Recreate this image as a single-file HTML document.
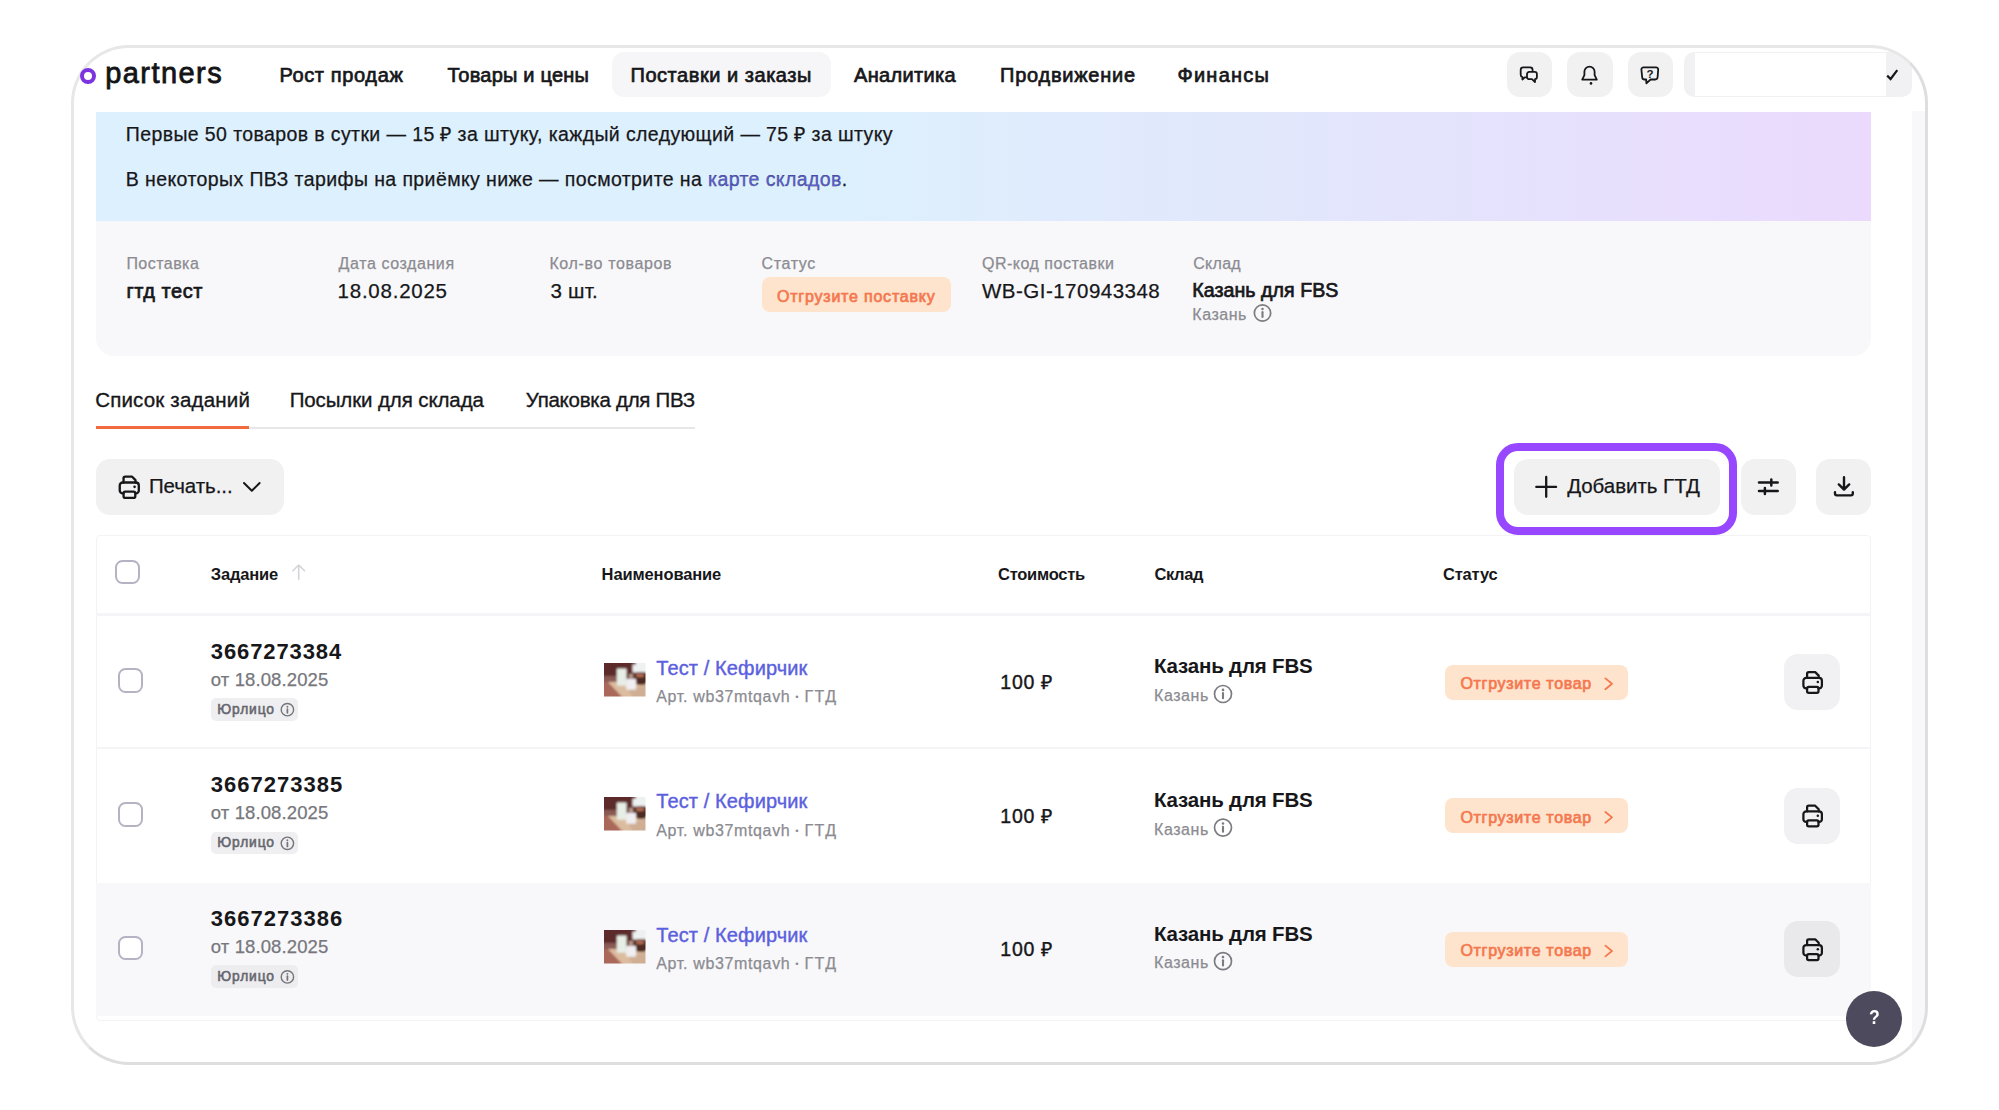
<!DOCTYPE html>
<html lang="ru">
<head>
<meta charset="utf-8">
<title>Partners — Поставки и заказы</title>
<style>
html,body{margin:0;padding:0;background:#fff;}
body{width:1999px;height:1110px;overflow:hidden;position:relative;font-family:"Liberation Sans",sans-serif;}
#frame{position:absolute;left:71.4px;top:44.8px;width:1856.4px;height:1020.3px;box-sizing:border-box;border:3px solid #e7e7e8;border-right-color:#dedee1;border-bottom-color:#dedede;border-radius:58px;}
#clip{position:absolute;left:74.4px;top:47.8px;width:1850.4px;height:1014.3px;border-radius:55px;overflow:hidden;}
#page{position:absolute;left:-74.4px;top:-47.8px;width:1999px;height:1110px;}
.b{position:absolute;box-sizing:border-box;}
.t{position:absolute;white-space:nowrap;line-height:1;margin:0;}
.btn{background:#f1f1f2;border-radius:13px;}
.cb{border:2px solid #b5b3c3;border-radius:7.5px;background:#fff;width:24.5px;height:24.5px;}
.badge{background:#ffe4cd;border-radius:8px;}
svg{position:absolute;left:0;top:0;overflow:visible;}
</style>
</head>
<body>
<div id="clip"><div id="page">
  <!-- scrollbar track -->
  <div class="b" style="left:1912px;top:111px;width:14px;height:960px;background:#f8f8fa"></div>
  <!-- nav active pill -->
  <div class="b" style="left:612px;top:52px;width:218.5px;height:45px;background:#f6f6f8;border-radius:12px"></div>
  <!-- header buttons -->
  <div class="b btn" style="left:1506.5px;top:52px;width:45.6px;height:45px"></div>
  <div class="b btn" style="left:1567.1px;top:52px;width:45.6px;height:45px"></div>
  <div class="b btn" style="left:1627.9px;top:52px;width:45.6px;height:45px"></div>
  <div class="b" style="left:1683.6px;top:52px;width:228.4px;height:44.5px;background:#f1f1f3;border-radius:10px"></div>
  <div class="b" style="left:1695px;top:53px;width:191px;height:42.6px;background:#fff"></div>
  <!-- banner -->
  <div class="b" style="left:96px;top:112px;width:1775.4px;height:109.5px;background:linear-gradient(90deg,#ddf0fd 0%,#ddf0fd 42%,#e3e5fc 72%,#ebdafd 100%)"></div>
  <!-- info card -->
  <div class="b" style="left:96px;top:221px;width:1775.4px;height:134.7px;background:#f8f8fa;border-radius:0 0 18px 18px"></div>
  <div class="b badge" style="left:761.5px;top:277.2px;width:189.8px;height:34.7px"></div>
  <!-- tabs underline -->
  <div class="b" style="left:96px;top:426.5px;width:598.8px;height:2px;background:#e7e7ea"></div>
  <div class="b" style="left:96px;top:426.2px;width:153.4px;height:2.7px;background:#f26b3e"></div>
  <!-- toolbar buttons -->
  <div class="b btn" style="left:96.2px;top:459px;width:188.2px;height:56px;border-radius:14px"></div>
  <div class="b btn" style="left:1513.6px;top:459px;width:206.4px;height:55.5px;border-radius:14px"></div>
  <div class="b btn" style="left:1741px;top:459px;width:55.2px;height:55.5px;border-radius:14px"></div>
  <div class="b btn" style="left:1816.3px;top:459px;width:55.2px;height:55.5px;border-radius:14px"></div>
  <!-- table -->
  <div class="b" style="left:96.3px;top:535px;width:1775px;height:485.6px;border:1.5px solid #f3f3f5;border-radius:4px;background:#fff"></div>
  <div class="b" style="left:96.3px;top:882.5px;width:1775px;height:133px;background:#f8f8fa"></div>
  <div class="b" style="left:96.3px;top:613.2px;width:1775px;height:3px;background:#f5f5f7"></div>
  <div class="b" style="left:96.3px;top:747px;width:1775px;height:2px;background:#f5f5f7"></div>
  <!-- purple highlight -->
  <div class="b" style="left:1496.4px;top:443px;width:240.3px;height:92px;border:8.4px solid #9747ff;border-radius:22px"></div>
  <!-- checkboxes -->
  <div class="b cb" style="left:115.2px;top:559.6px"></div>
  <div class="b cb" style="left:118px;top:668.4px"></div>
  <div class="b cb" style="left:118px;top:802px"></div>
  <div class="b cb" style="left:118px;top:935.6px"></div>
<div class="b" style="left:210.8px;top:698.0px;width:87.2px;height:22.8px;background:#efeff1;border-radius:5px"></div>
<div class="b badge" style="left:1445px;top:664.5px;width:182.5px;height:35px"></div>
<div class="b btn" style="left:1784.3px;top:653.9px;width:56px;height:56.3px;border-radius:14px;background:#f1f1f3"></div>
<svg style="left:604.2px;top:663.2px" width="41.5" height="33.5" viewBox="0 0 41.5 33.5">
<defs><filter id="bl0" x="-10%" y="-10%" width="120%" height="120%"><feGaussianBlur stdDeviation="0.9"/></filter>
<clipPath id="tc0"><rect width="41.5" height="33.5"/></clipPath></defs>
<g clip-path="url(#tc0)"><g filter="url(#bl0)">
<rect x="-3" y="-3" width="48" height="40" fill="#5b2b2c"/>
<rect x="-3" y="13" width="16" height="8" fill="#8a5a55"/>
<polygon points="-3,19 12,19 22,36 -3,36" fill="#a9675a"/>
<polygon points="4,19 44,19 44,36 20,36" fill="#dcbc9f"/>
<polygon points="24,26 44,22 44,36 30,36" fill="#cfae94"/>
<rect x="28.5" y="1.5" width="18" height="8" fill="#eef1f1"/>
<rect x="32" y="-3" width="14" height="6" fill="#eef1f1"/>
<ellipse cx="37" cy="15.5" rx="8" ry="6.6" fill="#4d2b22"/>
<ellipse cx="36" cy="12.2" rx="4.2" ry="2" fill="#b06a52"/>
<rect x="12.8" y="5.4" width="9.8" height="17.4" rx="1" fill="#e6eee6"/>
<rect x="22.2" y="15.8" width="9.8" height="11" rx="1" fill="#f1eef2"/>
<rect x="25" y="11" width="4" height="4.5" fill="#b59a8c"/>
</g></g></svg>
<div class="b" style="left:210.8px;top:831.6px;width:87.2px;height:22.8px;background:#efeff1;border-radius:5px"></div>
<div class="b badge" style="left:1445px;top:798.1px;width:182.5px;height:35px"></div>
<div class="b btn" style="left:1784.3px;top:787.5px;width:56px;height:56.3px;border-radius:14px;background:#f1f1f3"></div>
<svg style="left:604.2px;top:796.8px" width="41.5" height="33.5" viewBox="0 0 41.5 33.5">
<defs><filter id="bl1" x="-10%" y="-10%" width="120%" height="120%"><feGaussianBlur stdDeviation="0.9"/></filter>
<clipPath id="tc1"><rect width="41.5" height="33.5"/></clipPath></defs>
<g clip-path="url(#tc1)"><g filter="url(#bl1)">
<rect x="-3" y="-3" width="48" height="40" fill="#5b2b2c"/>
<rect x="-3" y="13" width="16" height="8" fill="#8a5a55"/>
<polygon points="-3,19 12,19 22,36 -3,36" fill="#a9675a"/>
<polygon points="4,19 44,19 44,36 20,36" fill="#dcbc9f"/>
<polygon points="24,26 44,22 44,36 30,36" fill="#cfae94"/>
<rect x="28.5" y="1.5" width="18" height="8" fill="#eef1f1"/>
<rect x="32" y="-3" width="14" height="6" fill="#eef1f1"/>
<ellipse cx="37" cy="15.5" rx="8" ry="6.6" fill="#4d2b22"/>
<ellipse cx="36" cy="12.2" rx="4.2" ry="2" fill="#b06a52"/>
<rect x="12.8" y="5.4" width="9.8" height="17.4" rx="1" fill="#e6eee6"/>
<rect x="22.2" y="15.8" width="9.8" height="11" rx="1" fill="#f1eef2"/>
<rect x="25" y="11" width="4" height="4.5" fill="#b59a8c"/>
</g></g></svg>
<div class="b" style="left:210.8px;top:965.2px;width:87.2px;height:22.8px;background:#ededf0;border-radius:5px"></div>
<div class="b badge" style="left:1445px;top:931.7px;width:182.5px;height:35px"></div>
<div class="b btn" style="left:1784.3px;top:921.1px;width:56px;height:56.3px;border-radius:14px;background:#e9e9eb"></div>
<svg style="left:604.2px;top:930.4px" width="41.5" height="33.5" viewBox="0 0 41.5 33.5">
<defs><filter id="bl2" x="-10%" y="-10%" width="120%" height="120%"><feGaussianBlur stdDeviation="0.9"/></filter>
<clipPath id="tc2"><rect width="41.5" height="33.5"/></clipPath></defs>
<g clip-path="url(#tc2)"><g filter="url(#bl2)">
<rect x="-3" y="-3" width="48" height="40" fill="#5b2b2c"/>
<rect x="-3" y="13" width="16" height="8" fill="#8a5a55"/>
<polygon points="-3,19 12,19 22,36 -3,36" fill="#a9675a"/>
<polygon points="4,19 44,19 44,36 20,36" fill="#dcbc9f"/>
<polygon points="24,26 44,22 44,36 30,36" fill="#cfae94"/>
<rect x="28.5" y="1.5" width="18" height="8" fill="#eef1f1"/>
<rect x="32" y="-3" width="14" height="6" fill="#eef1f1"/>
<ellipse cx="37" cy="15.5" rx="8" ry="6.6" fill="#4d2b22"/>
<ellipse cx="36" cy="12.2" rx="4.2" ry="2" fill="#b06a52"/>
<rect x="12.8" y="5.4" width="9.8" height="17.4" rx="1" fill="#e6eee6"/>
<rect x="22.2" y="15.8" width="9.8" height="11" rx="1" fill="#f1eef2"/>
<rect x="25" y="11" width="4" height="4.5" fill="#b59a8c"/>
</g></g></svg>
  <!-- help -->
  <div class="b" style="left:1846.4px;top:991px;width:56px;height:56px;border-radius:50%;background:#4c4a5c"></div>
  <div class="t" style="left:1869.4px;top:1007px;font-size:20px;font-weight:bold;color:#fff;transform:scaleX(0.88);transform-origin:left top">?</div>
<div class="t" style="left:279.40px;top:65.07px;font-size:20px;letter-spacing:0.627px;color:#17171a;-webkit-text-stroke:0.7px #17171a;">Рост продаж</div>
<div class="t" style="left:447.50px;top:65.07px;font-size:20px;letter-spacing:0.210px;color:#17171a;-webkit-text-stroke:0.7px #17171a;">Товары и цены</div>
<div class="t" style="left:630.50px;top:65.07px;font-size:20px;letter-spacing:0.535px;color:#17171a;-webkit-text-stroke:0.7px #17171a;">Поставки и заказы</div>
<div class="t" style="left:854.00px;top:65.07px;font-size:20px;letter-spacing:0.329px;color:#17171a;-webkit-text-stroke:0.7px #17171a;">Аналитика</div>
<div class="t" style="left:1000.00px;top:65.07px;font-size:20px;letter-spacing:0.763px;color:#17171a;-webkit-text-stroke:0.7px #17171a;">Продвижение</div>
<div class="t" style="left:1177.50px;top:65.07px;font-size:20px;letter-spacing:1.235px;color:#17171a;-webkit-text-stroke:0.7px #17171a;">Финансы</div>
<div class="t" style="left:125.80px;top:124.79px;font-size:19.5px;letter-spacing:0.390px;color:#17171a;-webkit-text-stroke:0.25px #17171a;">Первые 50 товаров в сутки — 15 ₽ за штуку, каждый следующий — 75 ₽ за штуку</div>
<div class="t" style="left:125.80px;top:169.99px;font-size:19.5px;letter-spacing:0.402px;color:#17171a;-webkit-text-stroke:0.25px #17171a;">В некоторых ПВЗ тарифы на приёмку ниже — посмотрите на <span style="color:#5b60de">карте складов</span>.</div>
<div class="t" style="left:126.40px;top:255.76px;font-size:16px;letter-spacing:0.458px;color:#8b8b91;-webkit-text-stroke:0.25px #8b8b91;">Поставка</div>
<div class="t" style="left:338.60px;top:255.76px;font-size:16px;letter-spacing:0.586px;color:#8b8b91;-webkit-text-stroke:0.25px #8b8b91;">Дата создания</div>
<div class="t" style="left:549.40px;top:255.76px;font-size:16px;letter-spacing:0.649px;color:#8b8b91;-webkit-text-stroke:0.25px #8b8b91;">Кол-во товаров</div>
<div class="t" style="left:761.50px;top:255.76px;font-size:16px;letter-spacing:0.644px;color:#8b8b91;-webkit-text-stroke:0.25px #8b8b91;">Статус</div>
<div class="t" style="left:982.00px;top:255.76px;font-size:16px;letter-spacing:0.504px;color:#8b8b91;-webkit-text-stroke:0.25px #8b8b91;">QR-код поставки</div>
<div class="t" style="left:1193.30px;top:255.76px;font-size:16px;letter-spacing:0.258px;color:#8b8b91;-webkit-text-stroke:0.25px #8b8b91;">Склад</div>
<div class="t" style="left:126.40px;top:281.07px;font-size:20px;letter-spacing:0.532px;color:#17171a;-webkit-text-stroke:0.7px #17171a;">гтд тест</div>
<div class="t" style="left:337.60px;top:280.65px;font-size:20.5px;letter-spacing:0.756px;color:#17171a;-webkit-text-stroke:0.25px #17171a;">18.08.2025</div>
<div class="t" style="left:550.40px;top:280.65px;font-size:20.5px;letter-spacing:0.235px;color:#17171a;-webkit-text-stroke:0.25px #17171a;">3 шт.</div>
<div class="t" style="left:777.00px;top:289.16px;font-size:16px;letter-spacing:0.789px;color:#f4784f;-webkit-text-stroke:0.7px #f4784f;">Отгрузите поставку</div>
<div class="t" style="left:982.00px;top:280.65px;font-size:20.5px;letter-spacing:0.484px;color:#17171a;-webkit-text-stroke:0.25px #17171a;">WB-GI-170943348</div>
<div class="t" style="left:1192.30px;top:281.41px;font-size:19.6px;letter-spacing:0.046px;color:#17171a;-webkit-text-stroke:0.7px #17171a;">Казань для FBS</div>
<div class="t" style="left:1192.30px;top:307.06px;font-size:16px;letter-spacing:0.538px;color:#8b8b91;-webkit-text-stroke:0.25px #8b8b91;">Казань</div>
<div class="t" style="left:95.20px;top:389.85px;font-size:20.5px;letter-spacing:0.182px;color:#17171a;-webkit-text-stroke:0.35px #17171a;">Список заданий</div>
<div class="t" style="left:289.70px;top:389.85px;font-size:20.5px;letter-spacing:-0.111px;color:#17171a;-webkit-text-stroke:0.35px #17171a;">Посылки для склада</div>
<div class="t" style="left:525.80px;top:389.85px;font-size:20.5px;letter-spacing:-0.270px;color:#17171a;-webkit-text-stroke:0.35px #17171a;">Упаковка для ПВЗ</div>
<div class="t" style="left:148.90px;top:475.65px;font-size:20.5px;letter-spacing:-0.068px;color:#17171a;-webkit-text-stroke:0.25px #17171a;">Печать...</div>
<div class="t" style="left:1567.20px;top:475.65px;font-size:20.5px;letter-spacing:-0.040px;color:#17171a;-webkit-text-stroke:0.25px #17171a;">Добавить ГТД</div>
<div class="t" style="left:210.80px;top:566.03px;font-size:16.5px;letter-spacing:-0.179px;color:#17171a;font-weight:bold;">Задание</div>
<div class="t" style="left:601.60px;top:566.03px;font-size:16.5px;letter-spacing:-0.125px;color:#17171a;font-weight:bold;">Наименование</div>
<div class="t" style="left:998.00px;top:566.03px;font-size:16.5px;letter-spacing:-0.264px;color:#17171a;font-weight:bold;">Стоимость</div>
<div class="t" style="left:1154.50px;top:566.03px;font-size:16.5px;letter-spacing:-0.383px;color:#17171a;font-weight:bold;">Склад</div>
<div class="t" style="left:1443.00px;top:566.03px;font-size:16.5px;letter-spacing:-0.186px;color:#17171a;font-weight:bold;">Статус</div>
<div class="t" style="left:210.80px;top:640.58px;font-size:22px;letter-spacing:0.898px;color:#17171a;font-weight:bold;">3667273384</div>
<div class="t" style="left:210.80px;top:670.74px;font-size:18.5px;letter-spacing:0.117px;color:#77777d;-webkit-text-stroke:0.25px #77777d;">от 18.08.2025</div>
<div class="t" style="left:217.30px;top:702.82px;font-size:13.8px;letter-spacing:0.871px;color:#66666e;-webkit-text-stroke:0.55px #66666e;">Юрлицо</div>
<div class="t" style="left:656.30px;top:657.87px;font-size:20px;letter-spacing:0.106px;color:#5b60de;-webkit-text-stroke:0.4px #5b60de;">Тест / Кефирчик</div>
<div class="t" style="left:656.30px;top:689.16px;font-size:16px;letter-spacing:0.644px;color:#8b8b91;-webkit-text-stroke:0.25px #8b8b91;">Арт. wb37mtqavh</div>
<div class="t" style="left:795.30px;top:692.16px;font-size:9.5px;letter-spacing:0.400px;color:#8b8b91;">•</div>
<div class="t" style="left:804.50px;top:689.16px;font-size:16px;letter-spacing:1.447px;color:#8b8b91;-webkit-text-stroke:0.25px #8b8b91;">ГТД</div>
<div class="t" style="left:1000.30px;top:673.29px;font-size:19.5px;letter-spacing:0.812px;color:#17171a;-webkit-text-stroke:0.4px #17171a;">100 ₽</div>
<div class="t" style="left:1154.00px;top:656.45px;font-size:20.5px;letter-spacing:-0.187px;color:#17171a;font-weight:bold;">Казань для FBS</div>
<div class="t" style="left:1154.00px;top:687.96px;font-size:16px;letter-spacing:0.578px;color:#8b8b91;-webkit-text-stroke:0.25px #8b8b91;">Казань</div>
<div class="t" style="left:1460.50px;top:675.96px;font-size:16px;letter-spacing:0.674px;color:#f4784f;-webkit-text-stroke:0.7px #f4784f;">Отгрузите товар</div>
<div class="t" style="left:210.80px;top:774.18px;font-size:22px;letter-spacing:1.009px;color:#17171a;font-weight:bold;">3667273385</div>
<div class="t" style="left:210.80px;top:804.34px;font-size:18.5px;letter-spacing:0.117px;color:#77777d;-webkit-text-stroke:0.25px #77777d;">от 18.08.2025</div>
<div class="t" style="left:217.30px;top:836.42px;font-size:13.8px;letter-spacing:0.871px;color:#66666e;-webkit-text-stroke:0.55px #66666e;">Юрлицо</div>
<div class="t" style="left:656.30px;top:791.47px;font-size:20px;letter-spacing:0.106px;color:#5b60de;-webkit-text-stroke:0.4px #5b60de;">Тест / Кефирчик</div>
<div class="t" style="left:656.30px;top:822.76px;font-size:16px;letter-spacing:0.644px;color:#8b8b91;-webkit-text-stroke:0.25px #8b8b91;">Арт. wb37mtqavh</div>
<div class="t" style="left:795.30px;top:825.76px;font-size:9.5px;letter-spacing:0.400px;color:#8b8b91;">•</div>
<div class="t" style="left:804.50px;top:822.76px;font-size:16px;letter-spacing:1.447px;color:#8b8b91;-webkit-text-stroke:0.25px #8b8b91;">ГТД</div>
<div class="t" style="left:1000.30px;top:806.89px;font-size:19.5px;letter-spacing:0.812px;color:#17171a;-webkit-text-stroke:0.4px #17171a;">100 ₽</div>
<div class="t" style="left:1154.00px;top:790.05px;font-size:20.5px;letter-spacing:-0.187px;color:#17171a;font-weight:bold;">Казань для FBS</div>
<div class="t" style="left:1154.00px;top:821.56px;font-size:16px;letter-spacing:0.578px;color:#8b8b91;-webkit-text-stroke:0.25px #8b8b91;">Казань</div>
<div class="t" style="left:1460.50px;top:809.56px;font-size:16px;letter-spacing:0.674px;color:#f4784f;-webkit-text-stroke:0.7px #f4784f;">Отгрузите товар</div>
<div class="t" style="left:210.80px;top:907.78px;font-size:22px;letter-spacing:1.009px;color:#17171a;font-weight:bold;">3667273386</div>
<div class="t" style="left:210.80px;top:937.94px;font-size:18.5px;letter-spacing:0.117px;color:#77777d;-webkit-text-stroke:0.25px #77777d;">от 18.08.2025</div>
<div class="t" style="left:217.30px;top:970.02px;font-size:13.8px;letter-spacing:0.871px;color:#66666e;-webkit-text-stroke:0.55px #66666e;">Юрлицо</div>
<div class="t" style="left:656.30px;top:925.07px;font-size:20px;letter-spacing:0.106px;color:#5b60de;-webkit-text-stroke:0.4px #5b60de;">Тест / Кефирчик</div>
<div class="t" style="left:656.30px;top:956.36px;font-size:16px;letter-spacing:0.644px;color:#8b8b91;-webkit-text-stroke:0.25px #8b8b91;">Арт. wb37mtqavh</div>
<div class="t" style="left:795.30px;top:959.36px;font-size:9.5px;letter-spacing:0.400px;color:#8b8b91;">•</div>
<div class="t" style="left:804.50px;top:956.36px;font-size:16px;letter-spacing:1.447px;color:#8b8b91;-webkit-text-stroke:0.25px #8b8b91;">ГТД</div>
<div class="t" style="left:1000.30px;top:940.49px;font-size:19.5px;letter-spacing:0.812px;color:#17171a;-webkit-text-stroke:0.4px #17171a;">100 ₽</div>
<div class="t" style="left:1154.00px;top:923.65px;font-size:20.5px;letter-spacing:-0.187px;color:#17171a;font-weight:bold;">Казань для FBS</div>
<div class="t" style="left:1154.00px;top:955.16px;font-size:16px;letter-spacing:0.578px;color:#8b8b91;-webkit-text-stroke:0.25px #8b8b91;">Казань</div>
<div class="t" style="left:1460.50px;top:943.16px;font-size:16px;letter-spacing:0.674px;color:#f4784f;-webkit-text-stroke:0.7px #f4784f;">Отгрузите товар</div>
<svg width="1999" height="1110" viewBox="0 0 1999 1110">
<path d="M1887.2,75.6 L1890.6,79 L1897.3,70.2" fill="none" stroke="#17171a" stroke-width="2.2" stroke-linejoin="miter"/>
<g fill="none" stroke="#17171a" stroke-width="1.8" stroke-linejoin="round"><path d="M1523.2,67.4 h6.9 a2.5,2.5 0 0 1 2.5,2.5 v4.9 a2.5,2.5 0 0 1 -2.5,2.5 h-5.4 l-2.3,2.2 v-2.4 a2.5,2.5 0 0 1 -1.7,-2.4 v-4.8 a2.5,2.5 0 0 1 2.5,-2.5 z"/><path d="M1529.2,71.9 h5.5 a2.2,2.2 0 0 1 2.2,2.2 v2.9 a2.2,2.2 0 0 1 -1.9,2.2 v2.9 l-3,-2.9 h-2.8 a2.2,2.2 0 0 1 -2.2,-2.2 v-2.9 a2.2,2.2 0 0 1 2.2,-2.2 z" fill="#f1f1f2"/></g>
<g fill="none" stroke="#17171a" stroke-width="1.8" stroke-linejoin="round"><path d="M1582.2,79.6 L1584.4,75.2 V71.7 a5.1,5.1 0 0 1 10.2,0 V75.2 L1596.8,79.6 Z"/><circle cx="1591" cy="83.4" r="1.3" fill="#17171a" stroke="none"/></g>
<g fill="none" stroke="#17171a" stroke-width="1.8" stroke-linejoin="round"><path d="M1643.6,67.3 H1656 a2.2,2.2 0 0 1 2.2,2.4 l-0.6,7.6 a2.4,2.4 0 0 1 -2.4,2.2 H1650.6 L1646.4,83.3 L1646.2,79.5 H1644.6 a2.4,2.4 0 0 1 -2.4,-2.2 l-0.8,-7.6 a2.2,2.2 0 0 1 2.2,-2.4 z"/></g>
<text x="1649.9" y="77.9" font-family="Liberation Sans, sans-serif" font-weight="bold" font-size="11.5" text-anchor="middle" fill="#17171a">?</text>
<g fill="none" stroke="#7b7b82" stroke-width="1.7" stroke-linecap="round">
<circle cx="1262.5" cy="313" r="8.15"/>
<path d="M1262.5,312.13 V317.04" stroke-width="2.12"/>
<circle cx="1262.5" cy="309.05" r="1.25" fill="#7b7b82" stroke="none"/>
</g>
<g transform="translate(118.2,474.9) scale(1.03)" fill="none" stroke="#17171a" stroke-width="2.25" stroke-linejoin="round" stroke-linecap="round">
<path d="M5.2,7.4 V3.2 a1.6,1.6 0 0 1 1.6,-1.6 H13.3 L16.8,5.1 V7.4"/>
<path d="M5.2,17.9 H4.3 a2.8,2.8 0 0 1 -2.8,-2.8 V10.2 a2.8,2.8 0 0 1 2.8,-2.8 H17.2 a2.8,2.8 0 0 1 2.8,2.8 V15.1 a2.8,2.8 0 0 1 -2.8,2.8 H16.6"/>
<rect x="5.2" y="16.3" width="11.4" height="6" rx="1.6"/>
<circle cx="15.9" cy="11.6" r="1.25" fill="#17171a" stroke="none"/>
</g>
<path d="M244,483 L251.8,490.8 L259.6,483" fill="none" stroke="#17171a" stroke-width="2" stroke-linecap="round" stroke-linejoin="round"/>
<path d="M1536.3,486.9 H1556.1 M1546.2,477 V496.8" fill="none" stroke="#17171a" stroke-width="2.3" stroke-linecap="round"/>
<path d="M1759,482.5 H1777.7 M1771.3,479.6 V485.6 M1759,490.9 H1777.7 M1764.9,487.9 V494" fill="none" stroke="#17171a" stroke-width="2.5" stroke-linecap="round"/>
<path d="M1844,477.3 V489 M1838.8,484.4 L1844,489.6 L1849.2,484.4 M1835,492.2 V493.6 a1.8,1.8 0 0 0 1.8,1.8 H1851 a1.8,1.8 0 0 0 1.8,-1.8 V492.2" fill="none" stroke="#17171a" stroke-width="2.4" stroke-linecap="round" stroke-linejoin="round"/>
<path d="M298.7,565 V579.3 M292.9,570.8 L298.7,565 L304.5,570.8" fill="none" stroke="#d3d3d8" stroke-width="1.6" stroke-linecap="round" stroke-linejoin="round"/>
<g fill="none" stroke="#74747b" stroke-width="1.4" stroke-linecap="round">
<circle cx="287.4" cy="709.7" r="6.20"/>
<path d="M287.4,709.04 V712.80" stroke-width="1.75"/>
<circle cx="287.4" cy="706.67" r="0.96" fill="#74747b" stroke="none"/>
</g>
<g fill="none" stroke="#7b7b82" stroke-width="1.7" stroke-linecap="round">
<circle cx="1223" cy="694.0" r="8.50"/>
<path d="M1223,693.10 V698.20" stroke-width="2.12"/>
<circle cx="1223" cy="689.90" r="1.30" fill="#7b7b82" stroke="none"/>
</g>
<path d="M1605.4,678.4 L1612,683.8 L1605.4,689.2" fill="none" stroke="#f4784f" stroke-width="1.8" stroke-linecap="round" stroke-linejoin="round"/>
<g transform="translate(1801.9,670.5) scale(1.0)" fill="none" stroke="#17171a" stroke-width="2.25" stroke-linejoin="round" stroke-linecap="round">
<path d="M5.2,7.4 V3.2 a1.6,1.6 0 0 1 1.6,-1.6 H13.3 L16.8,5.1 V7.4"/>
<path d="M5.2,17.9 H4.3 a2.8,2.8 0 0 1 -2.8,-2.8 V10.2 a2.8,2.8 0 0 1 2.8,-2.8 H17.2 a2.8,2.8 0 0 1 2.8,2.8 V15.1 a2.8,2.8 0 0 1 -2.8,2.8 H16.6"/>
<rect x="5.2" y="16.3" width="11.4" height="6" rx="1.6"/>
<circle cx="15.9" cy="11.6" r="1.25" fill="#17171a" stroke="none"/>
</g>
<g fill="none" stroke="#74747b" stroke-width="1.4" stroke-linecap="round">
<circle cx="287.4" cy="843.3" r="6.20"/>
<path d="M287.4,842.64 V846.40" stroke-width="1.75"/>
<circle cx="287.4" cy="840.27" r="0.96" fill="#74747b" stroke="none"/>
</g>
<g fill="none" stroke="#7b7b82" stroke-width="1.7" stroke-linecap="round">
<circle cx="1223" cy="827.6" r="8.50"/>
<path d="M1223,826.70 V831.80" stroke-width="2.12"/>
<circle cx="1223" cy="823.50" r="1.30" fill="#7b7b82" stroke="none"/>
</g>
<path d="M1605.4,812.0 L1612,817.4 L1605.4,822.8" fill="none" stroke="#f4784f" stroke-width="1.8" stroke-linecap="round" stroke-linejoin="round"/>
<g transform="translate(1801.9,804.1) scale(1.0)" fill="none" stroke="#17171a" stroke-width="2.25" stroke-linejoin="round" stroke-linecap="round">
<path d="M5.2,7.4 V3.2 a1.6,1.6 0 0 1 1.6,-1.6 H13.3 L16.8,5.1 V7.4"/>
<path d="M5.2,17.9 H4.3 a2.8,2.8 0 0 1 -2.8,-2.8 V10.2 a2.8,2.8 0 0 1 2.8,-2.8 H17.2 a2.8,2.8 0 0 1 2.8,2.8 V15.1 a2.8,2.8 0 0 1 -2.8,2.8 H16.6"/>
<rect x="5.2" y="16.3" width="11.4" height="6" rx="1.6"/>
<circle cx="15.9" cy="11.6" r="1.25" fill="#17171a" stroke="none"/>
</g>
<g fill="none" stroke="#74747b" stroke-width="1.4" stroke-linecap="round">
<circle cx="287.4" cy="976.9" r="6.20"/>
<path d="M287.4,976.24 V980.00" stroke-width="1.75"/>
<circle cx="287.4" cy="973.87" r="0.96" fill="#74747b" stroke="none"/>
</g>
<g fill="none" stroke="#7b7b82" stroke-width="1.7" stroke-linecap="round">
<circle cx="1223" cy="961.2" r="8.50"/>
<path d="M1223,960.30 V965.40" stroke-width="2.12"/>
<circle cx="1223" cy="957.10" r="1.30" fill="#7b7b82" stroke="none"/>
</g>
<path d="M1605.4,945.6 L1612,951.0 L1605.4,956.4" fill="none" stroke="#f4784f" stroke-width="1.8" stroke-linecap="round" stroke-linejoin="round"/>
<g transform="translate(1801.9,937.7) scale(1.0)" fill="none" stroke="#17171a" stroke-width="2.25" stroke-linejoin="round" stroke-linecap="round">
<path d="M5.2,7.4 V3.2 a1.6,1.6 0 0 1 1.6,-1.6 H13.3 L16.8,5.1 V7.4"/>
<path d="M5.2,17.9 H4.3 a2.8,2.8 0 0 1 -2.8,-2.8 V10.2 a2.8,2.8 0 0 1 2.8,-2.8 H17.2 a2.8,2.8 0 0 1 2.8,2.8 V15.1 a2.8,2.8 0 0 1 -2.8,2.8 H16.6"/>
<rect x="5.2" y="16.3" width="11.4" height="6" rx="1.6"/>
<circle cx="15.9" cy="11.6" r="1.25" fill="#17171a" stroke="none"/>
</g>
</svg>
</div></div>
<div id="frame"></div>
  <!-- logo -->
  <div class="b" style="left:79.6px;top:67.8px;width:16.6px;height:16.6px;border:4px solid #7c34e0;border-radius:50%"></div>
  <div class="t" id="logo" style="left:105.2px;top:58.6px;font-size:29px;letter-spacing:1.45px;color:#141416;-webkit-text-stroke:0.8px #141416">partners</div>

</body>
</html>
